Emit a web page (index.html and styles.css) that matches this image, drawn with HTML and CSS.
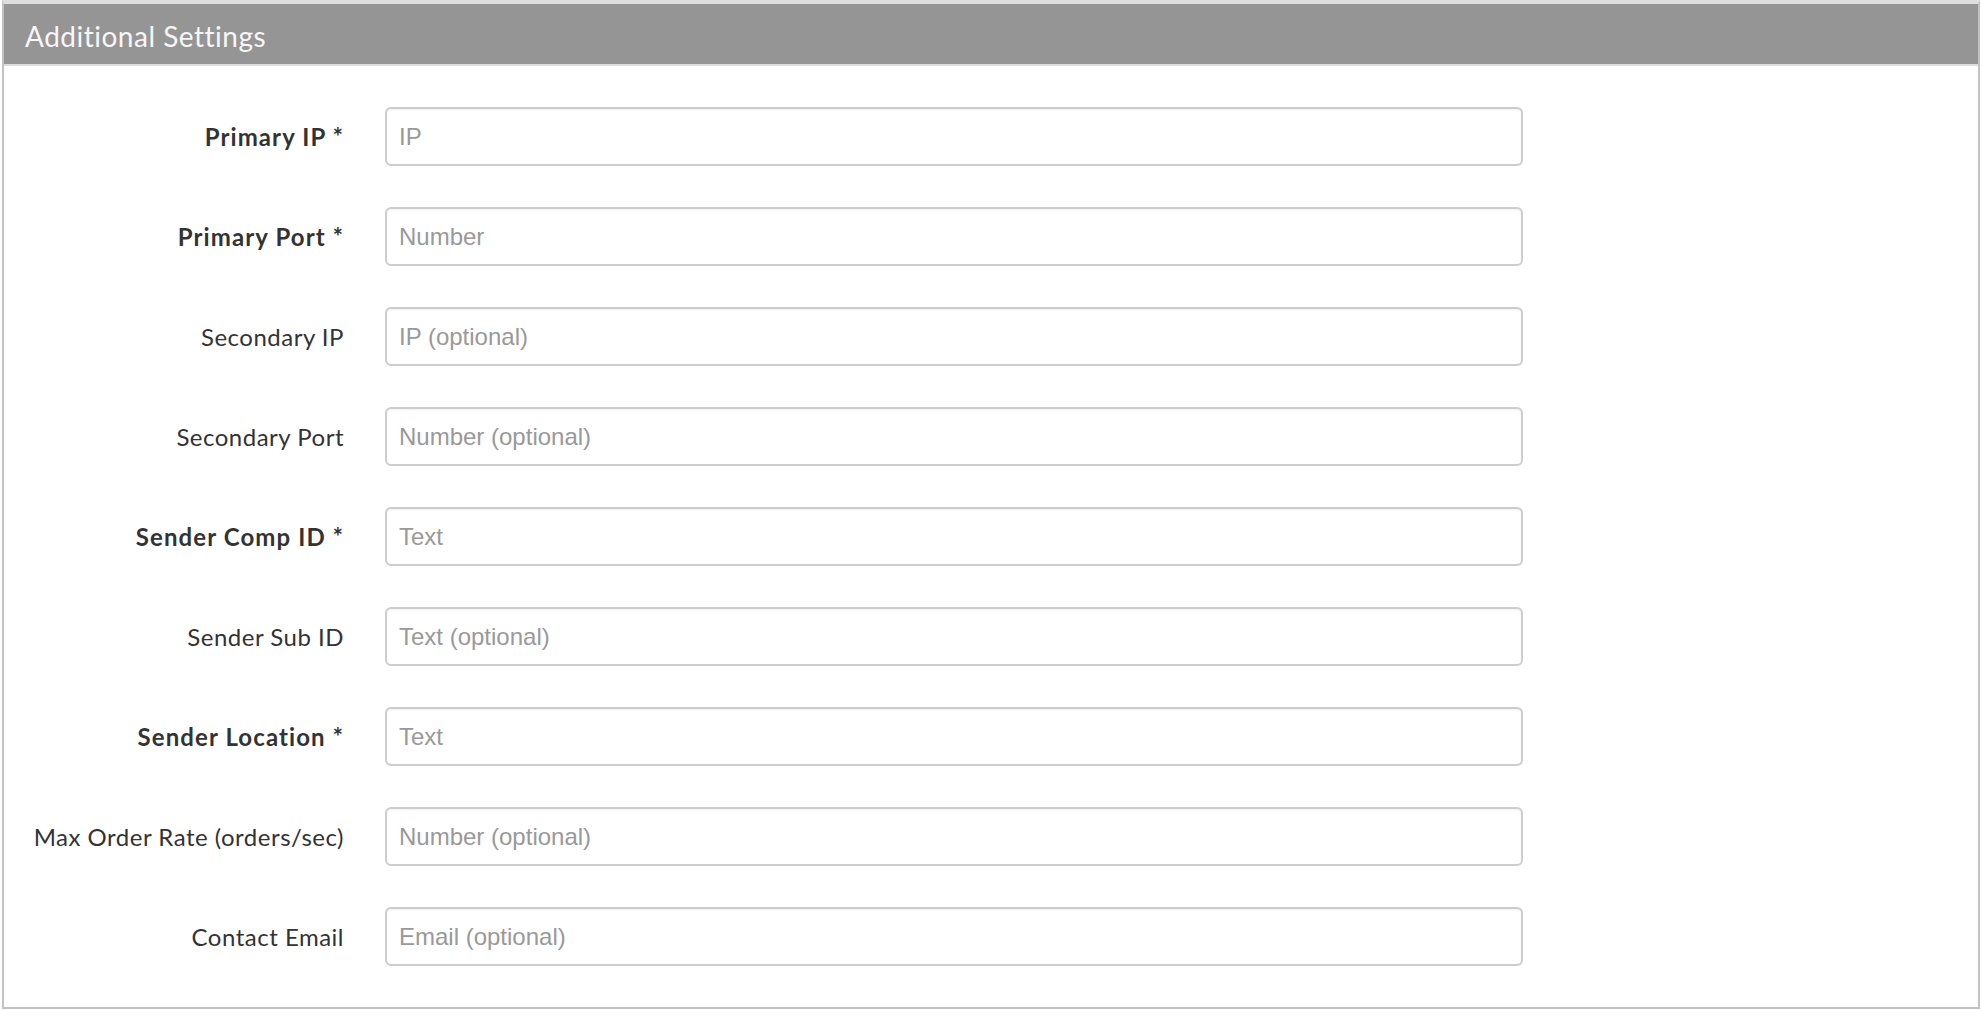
FILE: index.html
```html
<!DOCTYPE html>
<html>
<head>
<meta charset="utf-8">
<link rel="stylesheet" href="styles.css">
</head>
<body>
<div class="panel">
  <div class="panel-head">Additional Settings</div>
  <div class="panel-body">
    <div class="form-grid">
      <label class="lbl req">Primary IP *</label>
      <input class="field" type="text" placeholder="IP">
      <label class="lbl req">Primary Port *</label>
      <input class="field" type="text" placeholder="Number">
      <label class="lbl">Secondary IP</label>
      <input class="field" type="text" placeholder="IP (optional)">
      <label class="lbl">Secondary Port</label>
      <input class="field" type="text" placeholder="Number (optional)">
      <label class="lbl req">Sender Comp ID *</label>
      <input class="field" type="text" placeholder="Text">
      <label class="lbl">Sender Sub ID</label>
      <input class="field" type="text" placeholder="Text (optional)">
      <label class="lbl req">Sender Location *</label>
      <input class="field" type="text" placeholder="Text">
      <label class="lbl">Max Order Rate (orders/sec)</label>
      <input class="field" type="text" placeholder="Number (optional)">
      <label class="lbl">Contact Email</label>
      <input class="field" type="text" placeholder="Email (optional)">
    </div>
  </div>
</div>
</body>
</html>
```

FILE: styles.css
```css
html, body {
  margin: 0;
  padding: 0;
  background: #ffffff;
}
body {
  padding: 0 2px 1px 2px;
  font-family: Lato, "Open Sans", sans-serif;
}
.panel {
  border: 2px solid #c2c2c2;
  border-top: 4px solid #dedede;
  height: 1009px;
  box-sizing: border-box;
  display: flex;
  flex-direction: column;
}
.panel-head {
  height: 62px;
  box-sizing: border-box;
  background: #959595;
  color: #f7f7f7;
  font-size: 28px;
  letter-spacing: 0.5px;
  line-height: 60px;
  padding: 2px 0 0 21px;
  border-bottom: 2px solid #dcdcdc;
}
.panel-body {
  padding: 41px 0;
}
.form-grid {
  display: grid;
  grid-template-columns: 340px 1138px;
  column-gap: 41px;
  row-gap: 41px;
}
.lbl {
  font-size: 24px;
  letter-spacing: 0.5px;
  color: #333333;
  text-align: right;
  align-self: center;
  white-space: nowrap;
}
.lbl.req {
  font-weight: 700;
  letter-spacing: 1.1px;
}
.field {
  height: 59px;
  box-sizing: border-box;
  border: 2px solid #cdcdcd;
  border-radius: 6px;
  box-shadow: inset 0 1px 2px rgba(0,0,0,0.06);
  padding: 0 12px;
  font-family: "Liberation Sans", Arial, sans-serif;
  font-size: 24px;
  color: #333;
  outline: none;
  margin: 0;
}
.field::placeholder {
  color: #999999;
}
```
